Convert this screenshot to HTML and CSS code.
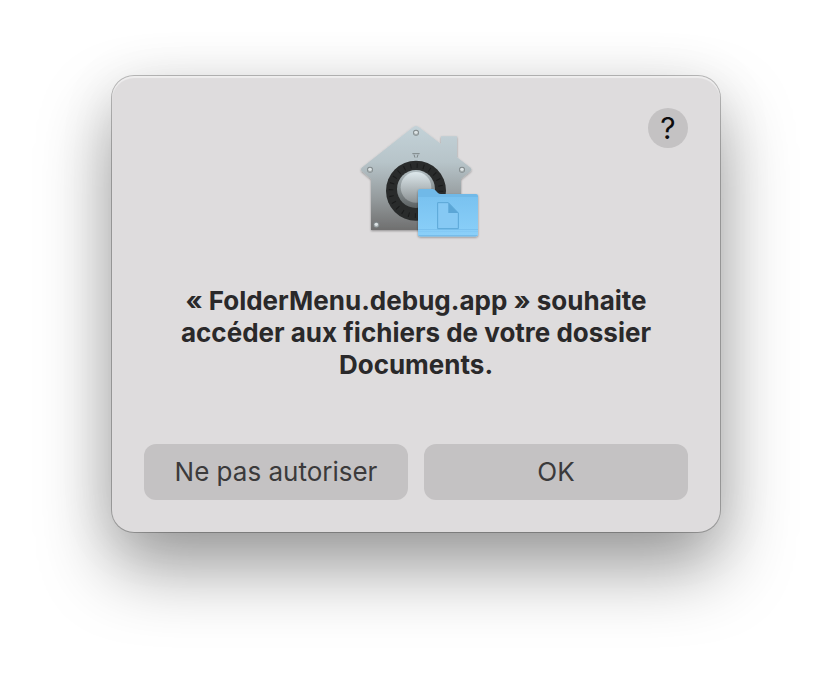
FILE: index.html
```html
<!DOCTYPE html>
<html lang="fr">
  <head>
    <meta charset="utf-8">
    <meta name="viewport" content="width=device-width, initial-scale=1">
    <title>Autorisation</title>
    <link rel="stylesheet" href="styles.css">
  </head>

  <body>
    <main class="dialog" role="alertdialog" aria-labelledby="message">
      <div class="top">
        <svg class="app-icon" viewBox="6 3 384 384" aria-hidden="true">
          <defs>
            <linearGradient id="steel" x1="0" y1="0" x2="0" y2="1">
              <stop offset="0" stop-color="#c3d2d8"/>
              <stop offset="0.35" stop-color="#b7c4c9"/>
              <stop offset="0.7" stop-color="#949a9c"/>
              <stop offset="1" stop-color="#6f6f6f"/>
            </linearGradient>
            <linearGradient id="rim" x1="0" y1="0" x2="0" y2="1">
              <stop offset="0" stop-color="#b3bfc3"/>
              <stop offset="1" stop-color="#5c6162"/>
            </linearGradient>
            <linearGradient id="knob" x1="0" y1="0" x2="0" y2="1">
              <stop offset="0" stop-color="#dde8ec"/>
              <stop offset="1" stop-color="#8b9193"/>
            </linearGradient>
            <linearGradient id="folder" x1="0" y1="0" x2="0" y2="1">
              <stop offset="0" stop-color="#79c2f0"/>
              <stop offset="1" stop-color="#8bd0f9"/>
            </linearGradient>
            <filter id="soft" x="-10%" y="-10%" width="120%" height="125%">
              <feDropShadow dx="0" dy="3" stdDeviation="3" flood-color="#000" flood-opacity="0.35"/>
            </filter>
            <g id="rivet">
              <circle r="9" fill="#7e8688"/>
              <circle cy="1" r="7" fill="#a4acae"/>
              <circle cy="-1" r="5" fill="#dde3e5"/>
            </g>
          </defs>

          <!-- house -->
          <path filter="url(#soft)" fill="url(#steel)" d="M190 36Q198 30 206 36L273 87V64H321V127L362 158Q367 163 362 168L333 192V345H63V192L35 168Q30 163 35 158Z"/>
          <use href="#rivet" x="198" y="53"/>
          <use href="#rivet" x="60" y="164"/>
          <use href="#rivet" x="336" y="164"/>
          <use href="#rivet" x="79" y="329"/>
          <path d="M187 116H209M192 119L195 128M204 119L201 128" fill="none" stroke="#7d8688" stroke-width="3"/>

          <!-- dial -->
          <circle cx="198" cy="227" r="90" fill="#292b2b"/>
          <circle cx="198" cy="227" r="75" fill="none" stroke="#1a1b1b" stroke-width="14" stroke-dasharray="3 16.63"/>
          <circle cx="198" cy="222" r="57" fill="url(#rim)"/>
          <circle cx="198" cy="217" r="46" fill="url(#knob)"/>

          <!-- folder -->
          <g filter="url(#soft)">
            <path fill="#6fb9e8" d="M204 228Q204 222 210 222H247Q252 222 256 226L263 233Q267 237 272 237H378Q384 237 384 243V358Q384 364 378 364H210Q204 364 204 358Z"/>
            <path fill="url(#folder)" d="M204 246H384V358Q384 364 378 364H210Q204 364 204 358Z"/>
            <path fill="#76bdeb" d="M204 343H384V345H204ZM204 350H384V351H204ZM206 360H382Q381 364 378 364H210Q207 364 206 360Z"/>
          </g>
          <path d="M263 263H295L325 294V341H263Z" fill="#86c9f4" stroke="#5ba6d6" stroke-width="3"/>
          <path d="M295 263L325 294H295Z" fill="#5ba6d6"/>
        </svg>
        <button class="help" type="button" aria-label="Aide">?</button>
      </div>

      <h1 id="message">«&nbsp;FolderMenu.debug.app&nbsp;» souhaite accéder aux fichiers de votre dossier Documents.</h1>

      <div class="actions">
        <button class="button" type="button">Ne pas autoriser</button>
        <button class="button" type="button">OK</button>
      </div>
    </main>
  </body>
</html>
```

FILE: styles.css
```css
* {
  box-sizing: border-box;
}

body {
  min-height: 100vh;
  margin: 0;
  padding: 76px 112px;
  background-color: #fff;
}

body, button {
  font-family: Inter, "Liberation Sans", sans-serif;
}

.dialog {
  max-width: 608px;
  margin: 0 auto;
  padding: 32px;
  border-radius: 22px;
  background-color: #dedcdd;
  box-shadow:
    inset 0 2px 1px rgba(255, 255, 255, 0.5),
    0 0 0 1px rgba(0, 0, 0, 0.25),
    0 36px 72px rgba(0, 0, 0, 0.38),
    0 8px 60px rgba(0, 0, 0, 0.08);
}

.top {
  display: grid;
  grid-template-columns: 40px 1fr 40px;
}

.app-icon {
  grid-column: 2;
  justify-self: center;
  width: 128px;
  height: 128px;
  margin-top: 8px;
}

.help {
  width: 40px;
  height: 40px;
  padding: 0;
  border: none;
  border-radius: 50%;
  background-color: #c4c2c3;
  color: #0c0c0c;
  font-size: 30px;
  line-height: 40px;
}

h1 {
  margin: 41px 0 63px;
  color: #2a292a;
  font-size: 26px;
  font-weight: 700;
  line-height: 32px;
  text-align: center;
}

.actions {
  display: grid;
  grid-template-columns: 1fr 1fr;
  gap: 16px;
}

.button {
  min-height: 56px;
  padding: 0 8px 2px;
  border: none;
  border-radius: 12px;
  background-color: #c4c2c3;
  color: #3b3a3b;
  font-size: 26px;
}
```
